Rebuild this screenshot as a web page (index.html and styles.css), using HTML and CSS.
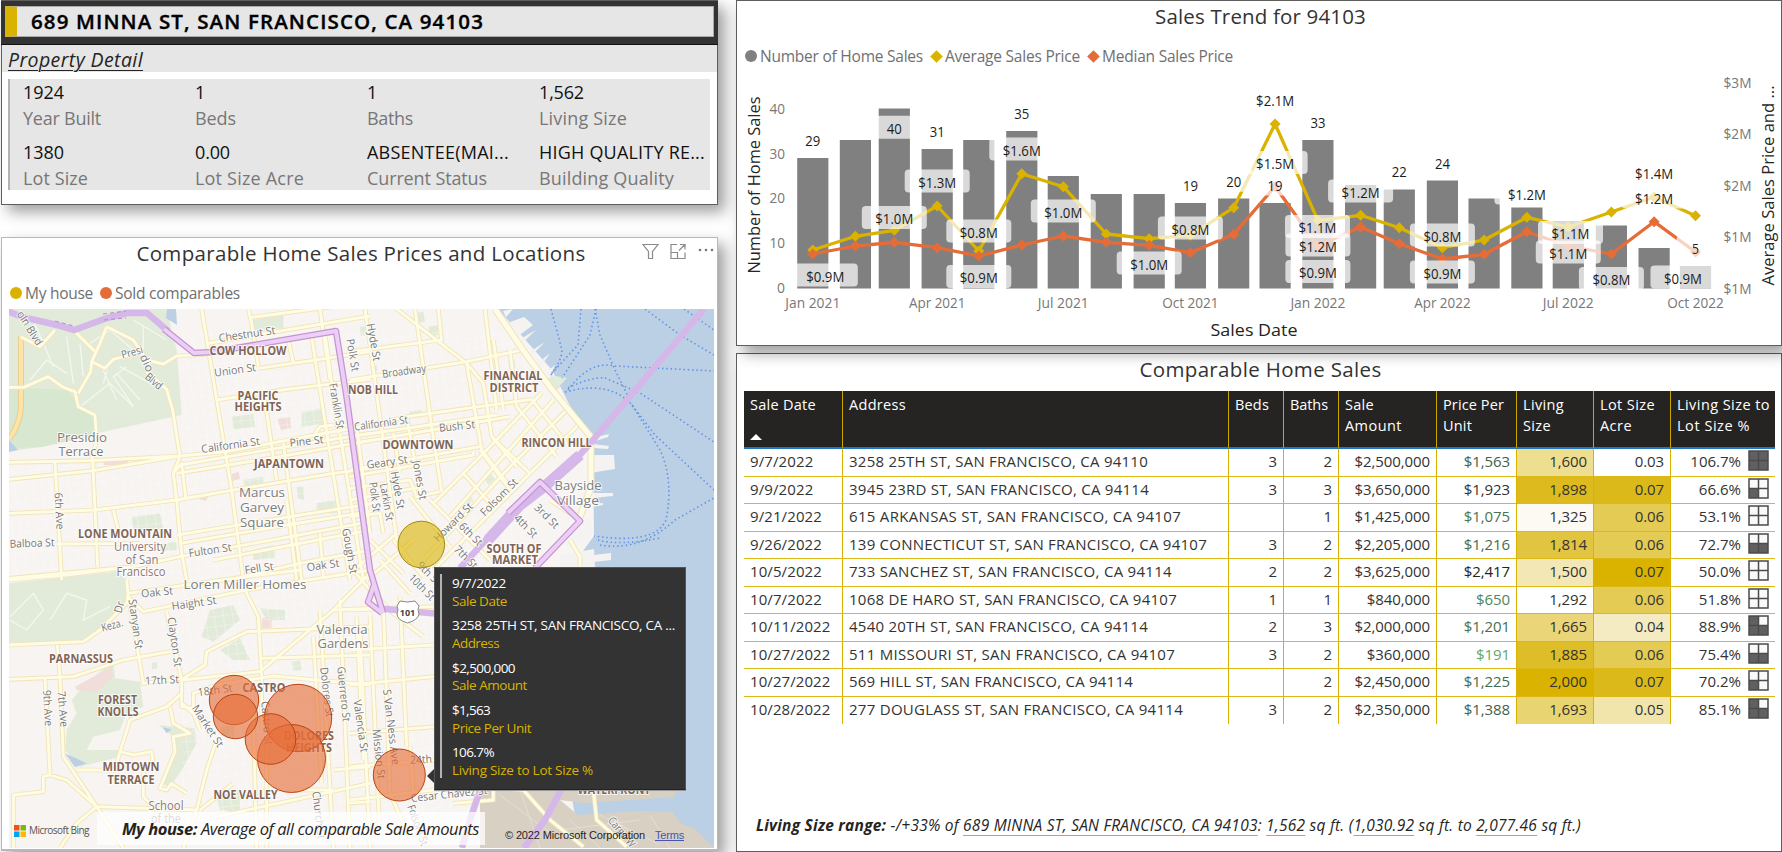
FILE: index.html
```html
<!DOCTYPE html>
<html lang="en">
<head>
<meta charset="utf-8">
<title>Comparable Home Sales</title>
<link rel="stylesheet" href="styles.css">
</head>
<body>
<main class="report">
  <div class="column">
    <section class="card property">
      <header class="address-bar"><h1 class="address"><span class="fit" data-w="453">689 MINNA ST, SAN FRANCISCO, CA 94103</span></h1></header>
      <div class="detail-title"><span class="fit" data-w="135">Property Detail</span></div>
      <dl class="facts">
        <div><dd><span class="fit" data-w="41">1924</span></dd><dt><span class="fit" data-w="78">Year Built</span></dt></div>
        <div><dd>1</dd><dt><span class="fit" data-w="41">Beds</span></dt></div>
        <div><dd>1</dd><dt><span class="fit" data-w="46">Baths</span></dt></div>
        <div><dd><span class="fit" data-w="45">1,562</span></dd><dt><span class="fit" data-w="88">Living Size</span></dt></div>
        <div><dd><span class="fit" data-w="41">1380</span></dd><dt><span class="fit" data-w="65">Lot Size</span></dt></div>
        <div><dd><span class="fit" data-w="35">0.00</span></dd><dt><span class="fit" data-w="109">Lot Size Acre</span></dt></div>
        <div><dd><span class="fit" data-w="142">ABSENTEE(MAI...</span></dd><dt><span class="fit" data-w="120">Current Status</span></dt></div>
        <div><dd><span class="fit" data-w="166">HIGH QUALITY RE...</span></dd><dt><span class="fit" data-w="135">Building Quality</span></dt></div>
      </dl>
    </section>

    <section class="card map-card">
      <header class="map-head">
        <h2 class="title"><span class="fit" data-w="449">Comparable Home Sales Prices and Locations</span></h2>
        <div class="tools">
          <svg width="75" height="20" viewBox="0 0 75 20" fill="none" stroke="#8a8a8a" stroke-width="1.2">
            <path d="M2 3.5h15l-5.500 7v7h-4v-7z"/>
            <path d="M36 3.500h-6v14h14v-6M39 3.500h5v5M44 3.500l-6 6M30 11.500h6.500v6"/>
            <g fill="#777" stroke="none"><circle cx="59" cy="9" r="1.300"/><circle cx="65" cy="9" r="1.300"/><circle cx="71" cy="9" r="1.300"/></g>
          </svg>
        </div>
      </header>
      <div class="legend map-legend">
        <i class="dot gold"></i><span class="fit" data-w="68">My house</span>
        <i class="dot orange"></i><span class="fit" data-w="125">Sold comparables</span>
      </div>
      <div class="map">
        <svg class="map-art" viewBox="9 309 705 539" width="705" height="539">
          <defs>
            <g id="roads">
              <g transform="translate(0 300) scale(.33333)">
                <path d="M27 262L70 262L145 230L190 262L225 275L235 320L285 345L290 420L275 480M235 280L272 215L275 185L300 130L320 80M220 90L290 160M275 185L315 205L340 178L390 165M320 80L400 120L440 180L490 192L530 168L630 162M440 215L500 268L518 330L540 470L520 520L530 600L545 760L560 840M62 110L120 140L165 90"/>
                <path d="M605 27L680 480L695 570L730 840M745 27L755 70L775 200M865 120L880 190M625 130L830 95L1110 48M775 205L960 178L1110 155M650 300L860 268L1110 238M755 52L1110 5"/>
                <path d="M27 487L275 482L540 468L680 455L945 405L1110 375M27 538L280 512L540 468M540 495L830 445L1110 400M530 520L840 470L1110 422M27 640L285 630L530 600L690 572L1000 520L1110 505"/>
                <path d="M165 485L185 840M278 480L293 800M340 630L360 710M170 732L420 730M530 705L870 650L1110 612M540 730L880 672L1110 635M27 835L400 800L540 770L860 712L1110 665M730 830L900 790L1110 750M640 780L1110 690"/>
                <path d="M795 300L830 540M850 430L905 840M935 110L1050 840M975 100L1015 400M960 27L990 240M860 600L890 840M945 400L960 380L1000 375M520 520L545 490L558 600M1020 400L1090 840M960 700L970 830"/>
              </g>
              <g transform="translate(350 300) scale(.33333)">
                <path d="M140 27L350 190L400 250L425 410L500 500M195 27L245 380L275 575M265 27L275 125M45 27L110 500L140 720M405 27L440 330M430 120L460 330M350 190L395 450L480 560M0 155L275 120M0 240L350 185L515 150M480 150L500 320"/>
                <path d="M0 390L170 350L545 298M0 410L440 345M0 432L100 415L480 350M0 530L370 465L370 455M0 510L390 440M0 565L180 540L200 590L270 575M20 380L60 700M170 350L215 600M130 400L150 520M0 650L90 640L100 700M0 600L220 560"/>
                <path d="M575 278L430 430L250 610M610 300L300 650M650 330L480 500L220 780M690 370L560 500L250 810M720 430L620 530M545 298L650 430M500 320L620 470M425 410L540 520M390 450L480 570M340 520L420 610M240 600L420 780M180 590L300 740M130 720L220 830M60 720L160 820M0 820L140 700M50 840L190 720M660 720L690 770L690 840M600 600L690 660"/>
              </g>
              <g transform="translate(0 570) scale(.33333)">
                <path d="M27 225L250 215L300 180L380 100L385 70L560 45L740 20L900 0M380 30L385 80L430 340L540 325M27 30L200 15L360 -5M385 80L430 125L740 60L1110 0M500 125L545 330L545 410L580 415M27 328L220 320L370 270L510 245M545 330L780 305L1000 120L1110 10M550 325L615 285L620 245L700 205L740 185L1110 170M735 60L775 140L785 320L785 480"/>
                <path d="M172 225L180 320L190 560L290 710L230 760L180 834M135 325L150 615L200 630L290 710L370 834M150 615L130 620L130 665L40 675L40 834M580 415L580 370L650 345L820 318L1110 345M230 600L345 600L360 545L390 450L500 410L545 370M360 545L400 555L455 545L460 590L430 600L430 680L470 720M510 410L520 460L570 490L520 500L525 545L480 655L500 660L515 640L560 670M545 400L580 430L600 480"/>
                <path d="M650 510L620 600L590 720L550 834M760 440L770 834M600 720L700 640M650 740L1110 640M960 120L1000 834M1020 90L1050 834M1080 180L1110 834M780 265L1110 255M880 660L1000 660M940 200L965 640M290 710L590 720M1000 120L1110 115M1000 600L1110 590M1040 700L1110 695M800 520L800 834"/>
              </g>
              <g transform="translate(350 560) scale(.33333)">
                <path d="M0 20L60 90L130 160L220 230M90 0L180 100M0 150L250 140M0 270L250 255M0 375L250 350M60 165L90 834M100 140L120 700M150 110L170 560M20 170L40 600M0 520L260 500M0 620L260 600M0 720L250 690L420 680L520 690M180 560L190 700M120 700L180 834M520 690L600 780L700 860M730 690L740 780L830 860M430 680L430 720L310 730"/>
              </g>
            </g>
            <pattern id="blocks" width="9" height="10" patternUnits="userSpaceOnUse" patternTransform="rotate(-8)"><path d="M0 0H9M0 0V10" stroke="#fff" stroke-width=".6" fill="none"/></pattern>
          </defs>
          <rect class="land" x="9" y="309" width="705" height="539"/>
          <g class="park" transform="translate(0 300) scale(.33333)">
            <path d="M27 27H500L530 150L545 345L290 400L130 440L20 455Z"/>
            <path class="park-deep" d="M27 262L205 270L240 325L280 350L285 405L130 440L27 445Z"/>
            <path d="M695 350L760 342L765 380L700 388ZM905 335L970 325L975 370L905 380ZM395 650L480 640L490 690L400 690ZM730 540L790 530L790 560L735 565ZM950 610L1010 600L1012 640L950 640ZM760 750L820 735L825 775L760 780ZM755 60L850 45L850 85L755 92ZM480 730L530 725L530 750L480 752ZM1080 80L1110 78L1110 105L1082 107ZM890 560L910 560L912 600L892 595Z"/>
          </g>
          <g class="park" transform="translate(350 300) scale(.33333)">
            <path d="M190 40L220 35L225 65L200 70ZM235 80L265 75L265 105L240 110ZM475 182L495 180L497 205L478 205ZM580 235L645 232L650 245L620 270ZM400 530L420 520L435 535L415 555ZM180 335L215 330L215 345L180 348ZM60 200L80 195L82 215L64 218ZM350 595L365 590L370 605L352 610Z"/>
          </g>
          <g class="park" transform="translate(0 570) scale(.33333)">
            <path d="M27 40L350 5L380 30L380 90L290 190L240 215L27 228ZM630 120L700 105L720 150L640 215L605 200ZM660 240L720 205L750 270L700 270ZM345 325L420 335L430 410L380 430L360 480L280 500L260 540L360 540L360 560L240 590L195 540L200 480L230 430L215 390L250 350L340 270ZM475 465L585 475L590 520L545 600L510 650L480 640L530 550L520 500ZM780 115L855 120L855 150L800 150ZM660 470L700 465L705 500L665 500ZM650 680L720 660L720 725L660 720ZM455 280L470 275L472 295L456 298ZM875 275L900 272L905 300L880 302Z"/>
            <path class="rose" d="M225 350L335 290L340 320L290 365L230 360ZM785 145L815 140L815 175L785 175Z"/>
            <path class="water" d="M195 550L260 580L225 592ZM488 472L515 478L500 490Z"/>
          </g>
          <path class="rose" d="M277 419L290 417L291 428L281 430ZM232 474L239 471L240 479L232 481ZM103 461L128 456L128 465L104 465ZM198 499L209 496L206 501Z"/>
          <rect x="182" y="330" width="348" height="510" fill="url(#blocks)"/>
          <rect x="9" y="465" width="173" height="110" fill="url(#blocks)"/>
          <g class="trails" transform="translate(0 300) scale(.33333)"><path d="M270 130L330 90L400 150M240 320L330 250L400 320M300 190L350 300M350 220L420 300M330 180L310 250M360 200L470 260M90 240L140 180L200 220M100 60L160 200M200 110L220 250M240 130L250 230M400 320L340 230L380 200M430 80L430 150M400 60L500 120M30 950L100 880L130 930L80 990L30 960M150 960L200 880L260 900L250 960L330 920"/></g>

          <path class="water" d="M498 309H714V848H580L570 785H610L585 770L560 565L583 551L594 536L593 440L583 430L567 400L552 370Z"/>
          <path class="water" d="M167 309H176L177 325L166 318ZM9 440L18 450L9 452Z"/>
          <path class="pier" d="M507 323L524 317L533 325L517 337ZM503 311L513 309L506 317ZM515 342L536 330L519 346ZM525 355L545 342L528 359ZM536 365L550 353L539 369ZM545 373L555 365L549 378ZM562 382L566 378L559 387ZM592 438L609 434L608 437L592 442ZM593 444L609 446L608 449L593 448ZM590 455H614L615 469L590 473ZM593 493H613V496L593 498ZM592 504L603 503L603 505L592 507ZM590 518L593 536L570 548L560 540ZM560 555L594 549L595 567H560ZM594 555L611 553V560L594 562Z"/>
          <path class="park-line" d="M549 375L567 378L558 387ZM575 415L585 425L580 430Z"/>
          <path class="industrial" d="M480 786H675V797L645 799L585 803L560 800L578 815L640 811L672 812L683 825L694 828L714 848H480Z"/>
          <path d="M500 795L560 840M520 790L540 848M570 820L600 848M610 815L640 840M600 815L660 845M560 830L640 820M650 815L670 848" stroke="#e5ded5" fill="none"/>
          <g class="ferry">
            <path d="M551 309L562 350Q562 360 551 375M581 309L578 345L550 375M596 309L590 335L562 378M595 309L600 335L615 370L630 400M645 309L680 335L714 355M684 309L714 330M568 390Q590 360 615 366L714 371M568 388Q590 377 605 378L640 393L714 442M565 392Q610 380 632 405L655 435L714 490M632 405L660 450Q674 480 666 520Q655 545 594 536M600 545Q640 552 675 520L714 498M598 540Q620 546 660 538"/>
          </g>

          <path d="M21 336V406Q20 425 9 439" fill="none" stroke="#e9cf93" stroke-width="6"/>
          <path d="M21 336V406Q20 425 9 439" fill="none" stroke="#fde3a6" stroke-width="4"/>
          <use href="#roads" class="road-case"/>
          <use href="#roads" class="road-fill"/>
          <path d="M495 309L523 350L550 387L591 437L591 487L580 517" class="shore-case"/>
          <path d="M495 309L523 350L550 387L591 437L591 487L580 517" class="shore-fill"/>

          <path class="freeway" d="M5 310L22 317L57 325L74 330L107 318L127 313L147 313L168 331"/>
          <path class="freeway" d="M704 309L593 440L570 466L546 484L516 507L495 530L460 568"/>
          <path class="freeway wide" d="M580 455L545 486L520 505L488 540"/>
          <path class="freeway" d="M375 608L440 614M561 790L545 820L524 848M480 790L470 820L462 848"/>
          <path class="hwy-case" d="M164 329L194 353L213 352L336 331L347 400L370 570L383 613M508 513L540 482L580 521L535 568M374 585L368 602L382 613"/>
          <path class="hwy-fill" d="M164 329L194 353L213 352L336 331L347 400L370 570L383 613M508 513L540 482L580 521L535 568M374 585L368 602L382 613"/>
          <path d="M55 321L74 326M103 314L126 311M104 320L126 318" stroke="#b48dcd" stroke-dasharray="4 3" fill="none"/>
          <g id="map-labels"></g>
          <path d="M400 601Q407.500 603 415 601L419 606Q417 609 419 614Q418 620 407.500 623Q397 620 397 614Q399 609 397 606Z" fill="#fff" stroke="#888"/>
          <text x="407.500" y="616" class="shield">101</text>
          <g class="mine"><circle cx="421.300" cy="544.500" r="23.300"/></g>
          <g class="sold">
            <circle cx="298" cy="718" r="33.700"/><circle cx="291.500" cy="758.500" r="34"/><circle cx="270.500" cy="739" r="25.300"/>
            <circle cx="234" cy="700" r="24.700"/><circle cx="235.500" cy="716.500" r="22.200"/><circle cx="399.300" cy="775" r="26"/>
          </g>
        </svg>
        <div class="map-note"><span class="fit" data-w="357"><b>My house:</b> Average of all comparable Sale Amounts</span></div>
        <div class="bing">
          <svg width="12" height="12" viewBox="0 0 12 12"><path fill="#f25022" d="M0 0h5.500v5.500H0z"/><path fill="#7fba00" d="M6.500 0H12v5.500H6.500z"/><path fill="#00a4ef" d="M0 6.500h5.500V12H0z"/><path fill="#ffb900" d="M6.500 6.500H12V12H6.500z"/></svg>
          <span class="fit" data-w="60">Microsoft Bing</span>
        </div>
        <div class="copyright"><span class="fit" data-w="140">© 2022 Microsoft Corporation</span><a class="fit" data-w="29">Terms</a></div>
        <aside class="tooltip">
          <dl>
            <div><dd><span class="fit" data-w="54">9/7/2022</span></dd><dt><span class="fit" data-w="55">Sale Date</span></dt></div>
            <div><dd><span class="fit" data-w="223">3258 25TH ST, SAN FRANCISCO, CA ...</span></dd><dt><span class="fit" data-w="47">Address</span></dt></div>
            <div><dd><span class="fit" data-w="63">$2,500,000</span></dd><dt><span class="fit" data-w="75">Sale Amount</span></dt></div>
            <div><dd><span class="fit" data-w="38">$1,563</span></dd><dt><span class="fit" data-w="79">Price Per Unit</span></dt></div>
            <div><dd><span class="fit" data-w="42">106.7%</span></dd><dt><span class="fit" data-w="141">Living Size to Lot Size %</span></dt></div>
          </dl>
        </aside>
      </div>
    </section>
  </div>

  <div class="column right">
    <section class="card trend">
      <h2 class="title"><span class="fit" data-w="211">Sales Trend for 94103</span></h2>
      <div class="legend trend-legend">
        <i class="dot gray"></i><span class="fit" data-w="163">Number of Home Sales</span>
        <i class="diamond gold"></i><span class="fit" data-w="135">Average Sales Price</span>
        <i class="diamond orange"></i><span class="fit" data-w="131">Median Sales Price</span>
      </div>
      <svg id="chart" class="chart" viewBox="738 72 1041 271" width="1041" height="271"></svg>
    </section>
    <section class="card sales">
      <h2 class="title"><span class="fit" data-w="242">Comparable Home Sales</span></h2>
      <table>
        <colgroup><col style="width:99px"><col style="width:386px"><col style="width:55px"><col style="width:55px"><col style="width:98px"><col style="width:80px"><col style="width:77px"><col style="width:77px"><col style="width:104px"></colgroup>
        <thead><tr>
          <th><span class="fit" data-w="66">Sale Date</span><i class="sort"></i></th>
          <th><span class="fit" data-w="57">Address</span></th>
          <th><span class="fit" data-w="34">Beds</span></th>
          <th><span class="fit" data-w="38">Baths</span></th>
          <th><span class="fit" data-w="29">Sale</span><br><span class="fit" data-w="57">Amount</span></th>
          <th><span class="fit" data-w="61">Price Per</span><br><span class="fit" data-w="29">Unit</span></th>
          <th><span class="fit" data-w="41">Living</span><br><span class="fit" data-w="28">Size</span></th>
          <th><span class="fit" data-w="55">Lot Size</span><br><span class="fit" data-w="32">Acre</span></th>
          <th><span class="fit" data-w="93">Living Size to</span><br><span class="fit" data-w="73">Lot Size %</span></th>
        </tr></thead>
        <tbody id="rows"></tbody>
      </table>
      <p class="footnote"><span class="fit" data-w="825"><b>Living Size range:</b> -/+33% of <u>689 MINNA ST, SAN FRANCISCO, CA 94103</u>: <u>1,562</u> sq ft. (<u>1,030.92</u> sq ft. to <u>2,077.46</u> sq ft.)</span></p>
    </section>
  </div>
</main>
<script src="script.js"></script>
</body>
</html>
```
FILE: styles.css
```css
* { box-sizing: border-box; }
body {
  margin: 0;
  background: #fff;
  font-family: "Open Sans", "Noto Sans", sans-serif;
  color: #252423;
  overflow: hidden;
}
h1, h2, dl, dd, dt, p { margin: 0; font-weight: 400; }
.fit { white-space: nowrap; display: inline-block; }
.report { display: flex; width: 1782px; height: 852px; gap: 18px; padding-left: 1px; }
.column { width: 717px; display: flex; flex-direction: column; gap: 32px; }
.column.right { width: 1046px; gap: 7px; }
.card { background: #fff; border: 1px solid #605e5c; box-shadow: 7px 7px 14px rgba(0,0,0,.38); }
.title { color: #333; font-size: 20.5px; line-height: 28px; text-align: center; }

.property { height: 205px; position: relative; z-index: 1; }
.address-bar { background: #333; height: 44px; padding: 5px 4px 8px; margin: 0 -1px; border-bottom: 1px solid #111; }
.address { height: 31px; background: #e6e6e6; border: 1px solid #aaa; border-left: 12px solid #d9b300; padding-left: 14px; font-size: 20.500px; line-height: 29px; font-weight: 600; color: #000; -webkit-text-stroke: .35px #000; }
.detail-title { background: #e6e6e6; height: 27px; padding-left: 6px; font-size: 19.500px; line-height: 30px; font-style: italic; }
.detail-title span { text-decoration: underline; text-decoration-thickness: 1px; text-underline-offset: 3px; }
.facts { margin: 7px 7px 0 6px; height: 111px; background: #e6e6e6; border-left: 2px solid #b3b3b3; padding: 0 0 0 13px; display: grid; grid-template-columns: repeat(4, 172px); grid-auto-rows: 59.500px; overflow: hidden; }
.facts dd { font-size: 18px; line-height: 26px; color: #111; white-space: nowrap; }
.facts dt { font-size: 18px; line-height: 26px; color: #777; }

.map-card { height: 614px; border-color: #b8b8b8; border-bottom-width: 2px; padding: 0 3px 0 7px; }
.map-head { display: grid; grid-template-columns: 1fr; }
.map-head .title { grid-area: 1 / 1; padding-top: 1px; height: 30px; margin-right: 1px; }
.tools { grid-area: 1 / 1; justify-self: end; padding-top: 3px; height: 28px; margin-right: -2px; }
.legend { display: flex; align-items: center; font-size: 15.500px; color: #707070; line-height: 22px; }
.dot { width: 12px; height: 12px; border-radius: 50%; margin-right: 3px; }
.diamond { width: 9px; height: 9px; transform: rotate(45deg); margin-right: 4px; }
.legend .fit + .dot { margin-left: 7px; }
.legend .fit + .diamond { margin-left: 9px; }
.gold { background: #d9b300; }
.orange { background: #e66c37; }
.gray { background: #808080; }
.map-legend { height: 24px; margin-top: 13px; padding-left: 1px; }
.map { margin-top: 4px; position: relative; width: 705px; height: 539px; }
.map-art { display: block; }
.land { fill: #f7f4f2; }
.park { fill: #e2ebd9; }
.park-deep { fill: #d8e7d0; }
.park-line { fill: #e3ecdb; }
.rose { fill: #f1deda; }
.water { fill: #bbd0e4; }
.pier { fill: #f5f3f1; }
.industrial { fill: #d9d0c4; }
.trails { fill: none; stroke: #fff; stroke-width: 4; opacity: .6; }
.ferry path { fill: none; stroke: #6494e4; stroke-width: 1.600; stroke-dasharray: 1.500 2.800; }
.road-case { fill: none; stroke: #f1e4ba; stroke-width: 14; stroke-linejoin: round; }
.road-fill { fill: none; stroke: #fffce4; stroke-width: 8.500; stroke-linejoin: round; }
.shore-case { fill: none; stroke: #f0e3ba; stroke-width: 7; }
.shore-fill { fill: none; stroke: #fffce6; stroke-width: 5; }
.freeway { fill: none; stroke: #d5b7e9; stroke-width: 6.500; }
.freeway.wide { stroke-width: 11; }
.hwy-case { fill: none; stroke: #c594d1; stroke-width: 6.500; stroke-linejoin: round; }
.hwy-fill { fill: none; stroke: #eccff6; stroke-width: 4; stroke-linejoin: round; }
.label { text-anchor: middle; paint-order: stroke; stroke: rgba(255,255,255,.75); stroke-width: 2px; }
.label.street { font-size: 11px; fill: #777; }
.label.hood { font-size: 11.500px; font-weight: 700; fill: #806556; }
.label.place { font-size: 13.500px; fill: #7d7d7d; }
.label.school { font-size: 12px; fill: #8d7676; }
.shield { font: 700 9px "Open Sans", sans-serif; text-anchor: middle; fill: #444; }
.mine circle { fill: rgba(217,179,0,.6); stroke: #a58912; }
.sold circle { fill: rgba(230,108,55,.62); stroke: #b84416; }
.map-note { position: absolute; left: 88px; top: 503px; width: 388px; height: 33px; padding-left: 25px; background: rgba(255,255,255,.72); font-size: 16.500px; line-height: 33px; font-style: italic; }
.bing { position: absolute; left: 5px; top: 515px; display: flex; gap: 3px; align-items: center; font-size: 10px; line-height: 13px; color: #555; }
.copyright { position: absolute; left: 496px; top: 519px; display: flex; gap: 10px; font: 11px/15px "Liberation Sans", sans-serif; }
.copyright a { color: #4656b0; text-decoration: underline; }
.tooltip { position: absolute; left: 425px; top: 258px; width: 252px; height: 223px; background: #333; border: 1px solid #555; border-bottom-color: #222; box-shadow: 0 1px 0 #999; padding: 6px 6px 6px 5px; }
.tooltip::before { content: ""; position: absolute; left: -8px; top: 201px; border: 7px solid transparent; border-left: 0; border-right-color: #333; }
.tooltip dl { border-left: 2px solid #b3b3b3; height: 204px; padding: 1px 0 0 10px; display: grid; grid-auto-rows: 42.300px; font-size: 13.500px; line-height: 17.700px; color: #fff; white-space: nowrap; }
.tooltip dt { color: #d9b300; }

.trend { height: 346px; position: relative; z-index: 1; padding: 0 1px; }
.trend .title { padding-top: 1px; height: 30px; padding-left: 3px; }
.trend-legend { padding-left: 7px; height: 24px; margin-top: 13px; margin-bottom: 4px; }
.chart { display: block; }
.bar { fill: #808080; }
.avg, .med { fill: none; stroke-width: 3.300; stroke-linejoin: round; }
.avg { stroke: #d9b300; }
.med { stroke: #e66c37; }
.avg-mark { fill: #d9b300; }
.med-mark { fill: #e66c37; }
.plate { fill: #fff; opacity: .7; }
.value { font-size: 14.500px; fill: #1c1c1c; text-anchor: middle; }
.tick { font-size: 14.500px; fill: #777; text-anchor: middle; }
.axis { font-size: 16.500px; fill: #252423; text-anchor: middle; }

.sales { height: 499px; padding: 0 6px 0 7px; }
.sales .title { padding-top: 2px; line-height: 27px; padding-left: 2px; }
table { margin-top: 8px; width: 1031px; table-layout: fixed; border-collapse: separate; border-spacing: 0; font-size: 15px; color: #333; }
th { background: #252423; color: #fff; text-align: left; vertical-align: top; height: 58px; padding: 3px 0 0 6px; font-weight: 400; line-height: 21px; font-size: 14.500px; border-right: 1px solid #c9a600; border-bottom: 2px solid #1f77c4; }
td { height: 27.500px; padding: 0 6px 2px; text-align: right; line-height: 20px; border-right: 1px solid #d9b300; border-bottom: 1px solid #dcb914; white-space: nowrap; }
td:nth-child(1), td:nth-child(2) { text-align: left; }
th:last-child, td:last-child { border-right: 0; }
tr:last-child td { border-bottom: 0; }
.sort { display: block; width: 0; border: 6px solid transparent; border-top: 0; border-bottom-color: #fff; margin-top: 19px; }
.grid-icon { vertical-align: middle; margin-left: 7px; margin-top: -4px; }
.footnote { margin-top: 89px; padding-left: 12px; font-size: 15.500px; line-height: 24px; font-style: italic; }
.footnote u { text-decoration-color: #70b0ee; text-decoration-thickness: 1px; text-underline-offset: 4px; text-decoration-skip-ink: none; }
.footnote b { font-weight: 700; }
```
FILE: script.js
```js
const NS = 'http://www.w3.org/2000/svg';
function add(parent, name, attrs, text) {
  const el = document.createElementNS(NS, name);
  for (const key in attrs) el.setAttribute(key, attrs[key]);
  if (text !== undefined) el.textContent = text;
  parent.appendChild(el);
  return el;
}

/* Combo chart */
const chart = document.getElementById('chart');
const centers = [812.8, 855.4, 894.3, 937.2, 978.8, 1021.8, 1063.3, 1106.3, 1149.2, 1190.4, 1233.7, 1275.1, 1317.9, 1360.6, 1399.3, 1442.4, 1484.1, 1526.9, 1568.3, 1611.4, 1654.1, 1695.5];
const counts = [29, 33, 40, 31, 33, 35, 25, 21, 21, 19, 20, 19, 33, 23, 22, 24, 20, 18, 15, 14, 9, 5];
const average = [250, 236.3, 230.3, 206, 251, 173.7, 186.7, 234, 238.7, 235.3, 207.7, 124, 220.3, 215.3, 227.7, 247.7, 240, 217.3, 227, 212, 197, 215.7];
const median = [254, 246, 242.3, 247.7, 256, 245, 236, 242.3, 245.3, 252.7, 234.3, 186.5, 246, 227, 243.7, 259, 254.3, 231.7, 246, 254, 221.7, 252];
counts.forEach((n, i) => add(chart, 'rect', { class: 'bar', x: centers[i] - 15.6, y: 288.5 - n * 4.5, width: 31.2, height: n * 4.5 }));
[['avg', average], ['med', median]].forEach(([cls, ys]) => {
  add(chart, 'polyline', { class: cls, points: ys.map((y, i) => centers[i] + ',' + y).join(' ') });
  ys.forEach((y, i) => add(chart, 'path', { class: cls + '-mark', d: `M${centers[i]} ${y - 5.5}l5.500 5.500l-5.500 5.500l-5.500-5.500z` }));
});
const values = [
  [812.8, 146, '29'], [894.3, 134.3, '40'], [937.2, 137.3, '31'], [1021.8, 119, '35'], [1190.4, 191, '19'], [1233.7, 187.3, '20'],
  [1275.1, 191, '19'], [1317.9, 128.3, '33'], [1399.3, 177.7, '22'], [1442.4, 169, '24'], [1695.5, 254.3, '5'],
  [825.3, 282, '$0.9M'], [894.3, 224.5, '$1.0M'], [937.2, 188, '$1.3M'], [978.8, 238, '$0.8M'], [978.8, 283.5, '$0.9M'],
  [1021.8, 156, '$1.6M'], [1063.3, 218, '$1.0M'], [1149.2, 270, '$1.0M'], [1190.4, 235, '$0.8M'], [1275.1, 106, '$2.1M'],
  [1275.1, 169.5, '$1.5M'], [1317.5, 233.5, '$1.1M'], [1317.9, 252, '$1.2M'], [1317.9, 278.5, '$0.9M'], [1360.6, 198, '$1.2M'],
  [1442.4, 242, '$0.8M'], [1442.4, 279, '$0.9M'], [1526.9, 200, '$1.2M'], [1570.5, 239.5, '$1.1M'], [1568.3, 259, '$1.1M'],
  [1611.4, 285.5, '$0.8M'], [1654.1, 179.5, '$1.4M'], [1654.1, 204, '$1.2M'], [1683, 284, '$0.9M']
];
values.forEach(([x, y, text]) => {
  const w = text.length > 2 ? 65 : 38;
  add(chart, 'rect', { class: 'plate', x: x - w / 2, y: y - 18.5, width: w, height: 23, rx: 4 });
});
values.forEach(([x, y, text]) => add(chart, 'text', { class: 'value', x, y: y - 0.5, textLength: text.length * 8 - (text.length > 2 ? 2 : 1), lengthAdjust: 'spacingAndGlyphs' }, text));
[40, 30, 20, 10, 0].forEach((n, i) => {
  const w = n ? 15.5 : 8;
  add(chart, 'text', { class: 'tick', x: 785 - w / 2, y: 113.7 + i * 44.8, textLength: w, lengthAdjust: 'spacingAndGlyphs' }, n);
});
['$3M', '$2M', '$2M', '$1M', '$1M'].forEach((t, i) => add(chart, 'text', { class: 'tick', x: 1737.5, y: 88 + i * 51.4, textLength: 28, lengthAdjust: 'spacingAndGlyphs' }, t));
['Jan 2021', 'Apr 2021', 'Jul 2021', 'Oct 2021', 'Jan 2022', 'Apr 2022', 'Jul 2022', 'Oct 2022'].forEach((t, i) =>
  add(chart, 'text', { class: 'tick', x: centers[i * 3], y: 307.5, textLength: t[0] === 'J' ? (t[2] === 'l' ? 51 : 55) : 56.5, lengthAdjust: 'spacingAndGlyphs' }, t));
add(chart, 'text', { class: 'axis', x: 1254, y: 336, textLength: 87, lengthAdjust: 'spacingAndGlyphs' }, 'Sales Date');
add(chart, 'text', { class: 'axis', transform: 'translate(759.5 185) rotate(-90)', textLength: 177, lengthAdjust: 'spacingAndGlyphs' }, 'Number of Home Sales');
add(chart, 'text', { class: 'axis', transform: 'translate(1773.500 185.500) rotate(-90)', textLength: 200, lengthAdjust: 'spacingAndGlyphs' }, 'Average Sales Price and ...');

/* Map labels: centre x, centre y, rotation, length, text */
const labels = {
  hood: [
    [248, 351, 0, 77, 'COW HOLLOW'], [258, 395.5, 0, 41, 'PACIFIC'], [258, 407, 0, 47, 'HEIGHTS'], [289, 464, 0, 70, 'JAPANTOWN'],
    [125, 534, 0, 94, 'LONE MOUNTAIN'], [373, 390, 0, 50, 'NOB HILL'], [513, 376, 0, 59, 'FINANCIAL'], [514, 388, 0, 49, 'DISTRICT'],
    [418, 444.5, 0, 71, 'DOWNTOWN'], [556.5, 443, 0, 70, 'RINCON HILL'], [514, 549, 0, 55, 'SOUTH OF'], [515, 560, 0, 46, 'MARKET'],
    [81, 659, 0, 64, 'PARNASSUS'], [117.5, 700, 0, 39, 'FOREST'], [118, 712, 0, 41, 'KNOLLS'], [264, 688, 0, 43, 'CASTRO'],
    [131, 767, 0, 57, 'MIDTOWN'], [131, 779.5, 0, 47, 'TERRACE'], [245.5, 795, 0, 64, 'NOE VALLEY'], [309, 736, 0, 50, 'DOLORES'],
    [309, 747.5, 0, 46, 'HEIGHTS'], [614, 790, 0, 73, 'WATERFRONT']],
  place: [
    [82, 437, 0, 50, 'Presidio'], [81, 451, 0, 45, 'Terrace'], [262, 492, 0, 46, 'Marcus'], [262, 507, 0, 44, 'Garvey'],
    [262, 522, 0, 44, 'Square'], [578, 485, 0, 47, 'Bayside'], [578, 500, 0, 42, 'Village'], [245, 584, 0, 123, 'Loren Miller Homes'],
    [342, 629, 0, 51, 'Valencia'], [343, 643, 0, 51, 'Gardens']],
  school: [[140, 547, 0, 52, 'University'], [142, 560, 0, 33, 'of San'], [141, 572, 0, 49, 'Francisco'], [166, 806, 0, 35, 'School'], [166, 819, 0, 30, 'of the']],
  street: [
    [247, 334, -8, 57, 'Chestnut St'], [235, 370, -8, 42, 'Union St'], [230.5, 445, -8, 59, 'California St'], [306.5, 441, -6, 34, 'Pine St'],
    [32, 543, -2, 45, 'Balboa St'], [210, 550, -8, 43, 'Fulton St'], [259, 568, -8, 29, 'Fell St'], [323, 565, -8, 33, 'Oak St'],
    [59.5, 511, 87, 37, '6th Ave'], [337, 406, 80, 46, 'Franklin St'], [353, 355, 80, 33, 'Polk St'], [350, 551, 80, 46, 'Gough St'],
    [30, 328, 58, 38, 'oln Blvd'], [132, 352, -15, 22, 'Presi'], [147, 363, 65, 18, 'dio'], [154, 381, 40, 19, 'Blvd'],
    [374, 342, 80, 38, 'Hyde St'], [404, 371, -8, 44, 'Broadway'], [381, 423, -8, 54, 'California St'], [457, 426, -6, 36, 'Bush St'],
    [387, 462, -8, 41, 'Geary St'], [420, 480, 80, 40, 'Jones St'], [398, 490, 80, 38, 'Hyde St'], [387, 502, 80, 38, 'Larkin St'],
    [375, 497, 82, 30, 'Polk St'], [499, 497, -45, 48, 'Folsom St'], [453, 522, -45, 50, 'Howard St'], [471, 534, 45, 28, '6th St'],
    [466, 557, 45, 28, '7th St'], [526, 526, 45, 28, '4th St'], [547, 516, 45, 30, '3rd St'], [429, 573, 45, 28, '9th St'],
    [422, 587, 45, 32, '10th St'], [157, 592, -6, 32, 'Oak St'], [194, 603, -8, 45, 'Haight St'], [136, 624, 82, 50, 'Stanyan St'],
    [175, 642, 82, 50, 'Clayton St'], [112, 625, -15, 22, 'Keza.'], [119, 607, -75, 12, 'Dr'], [162, 680, -3, 34, '17th St'],
    [215, 690, -8, 35, '18th St'], [208, 726, 57, 48, 'Market St'], [48, 708, 87, 36, '9th Ave'], [63, 709, 85, 36, '7th Ave'],
    [327, 692, 83, 50, 'Dolores St'], [344, 694, 84, 55, 'Guerrero St'], [361, 726, 82, 53, 'Valencia St'], [267, 723, 85, 44, 'Castro St'],
    [319, 815, 83, 48, 'Church St'], [391.5, 727, 83, 76, 'S Van Ness Ave'], [379, 754, 84, 50, 'Mission St'], [427, 759, -3, 34, '24th St'],
    [449, 794, -6, 77, 'Cesar Chavez St'], [418, 825, 70, 42, 'Folsom St'], [622, 832, 50, 36, 'Cargo W']]
};
const labelLayer = document.getElementById('map-labels');
for (const kind of ['street', 'school', 'place', 'hood']) {
  for (const [x, y, r, w, text] of labels[kind]) {
    add(labelLayer, 'text', { class: 'label ' + kind, transform: `translate(${x} ${y}) rotate(${r})`, dy: '.36em', textLength: w, lengthAdjust: 'spacingAndGlyphs' }, text);
  }
}

/* Table rows: date, address, beds, baths, amount, price, colour, living, shade, acre, shade, ratio, filled quarters */
const rows = [
  ['9/7/2022', '3258 25TH ST, SAN FRANCISCO, CA 94110', 3, 2, '$2,500,000', '$1,563', '#42604a', '1,600', '#eedf90', '0.03', '#fff', '106.7%', 4],
  ['9/9/2022', '3945 23RD ST, SAN FRANCISCO, CA 94114', 3, 3, '$3,650,000', '$1,923', '#333', '1,898', '#ddba1d', '0.07', '#dcb91a', '66.6%', 1],
  ['9/21/2022', '615 ARKANSAS ST, SAN FRANCISCO, CA 94107', '', 1, '$1,425,000', '$1,075', '#477551', '1,325', '#fdf9f3', '0.06', '#e4cb54', '53.1%', 0],
  ['9/26/2022', '139 CONNECTICUT ST, SAN FRANCISCO, CA 94107', 3, 2, '$2,205,000', '$1,216', '#456d4d', '1,814', '#e1c440', '0.06', '#e4cb54', '72.7%', 2],
  ['10/5/2022', '733 SANCHEZ ST, SAN FRANCISCO, CA 94114', 2, 2, '$3,625,000', '$2,417', '#252423', '1,500', '#f3e8b5', '0.07', '#d9b300', '50.0%', 0],
  ['10/7/2022', '1068 DE HARO ST, SAN FRANCISCO, CA 94107', 1, 1, '$840,000', '$650', '#4f8757', '1,292', '#fff', '0.06', '#e4cb54', '51.8%', 0],
  ['10/11/2022', '4540 20TH ST, SAN FRANCISCO, CA 94114', 2, 3, '$2,000,000', '$1,201', '#456f4e', '1,665', '#ead679', '0.04', '#f5ebc2', '88.9%', 3],
  ['10/27/2022', '511 MISSOURI ST, SAN FRANCISCO, CA 94107', 3, 2, '$360,000', '$191', '#62a866', '1,885', '#ddbd28', '0.06', '#e4cb54', '75.4%', 2],
  ['10/27/2022', '569 HILL ST, SAN FRANCISCO, CA 94114', '', 2, '$2,450,000', '$1,225', '#456b4d', '2,000', '#d9b300', '0.07', '#dcb91a', '70.2%', 1],
  ['10/28/2022', '277 DOUGLASS ST, SAN FRANCISCO, CA 94114', 3, 2, '$2,350,000', '$1,388', '#42634a', '1,693', '#e8d470', '0.05', '#f1e5ab', '85.1%', 3]
];
const addressWidths = [299, 300, 332, 358, 323, 328, 299, 326, 284, 334];
const quarters = [[1, 10], [10, 10], [1, 1], [10, 1]];
function gridIcon(n) {
  let s = '<svg class="grid-icon" width="21" height="21" viewBox="0 0 21 21"><rect x="1" y="1" width="19" height="19" fill="#fafafa"/>';
  quarters.slice(0, n).forEach(([x, y]) => { s += `<rect x="${x}" y="${y}" width="10" height="10" fill="#606060"/>`; });
  return s + '<path d="M1 1H20V20H1ZM10.500 1V20M1 10.500H20" fill="none" stroke="#4b4b4b" stroke-width="1.500"/></svg>';
}
const fit = (t, w) => `<span class="fit" data-w="${w}">${t}</span>`;
/* Digits advance 8.5px; separators are narrower. */
const numWidth = t => [...String(t)].reduce((w, c) => w + (c === ',' || c === '.' ? 3.7 : c === '/' ? 6.2 : c === '%' ? 13 : 8.5), 0);
document.getElementById('rows').innerHTML = rows.map((r, i) => '<tr>' +
  `<td>${fit(r[0], numWidth(r[0]))}</td><td>${fit(r[1], addressWidths[i])}</td><td>${r[2]}</td><td>${r[3]}</td><td>${fit(r[4], numWidth(r[4]))}</td>` +
  `<td style="color:${r[6]}">${fit(r[5], numWidth(r[5]))}</td><td style="background:${r[8]}">${fit(r[7], numWidth(r[7]))}</td>` +
  `<td style="background:${r[10]}">${fit(r[9], numWidth(r[9]))}</td><td>${fit(r[11], numWidth(r[11]))}${gridIcon(r[12])}</td></tr>`).join('');

document.querySelectorAll('.fit').forEach(el => {
  const extra = (+el.dataset.w - el.getBoundingClientRect().width) / el.textContent.length;
  el.style.letterSpacing = extra.toFixed(3) + 'px';
});
```
